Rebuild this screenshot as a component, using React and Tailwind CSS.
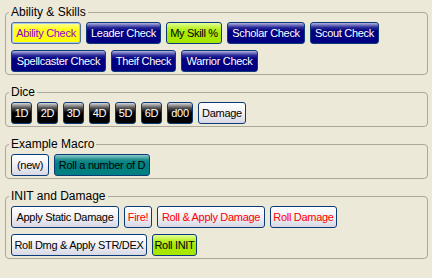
const navy = "text-white bg-[linear-gradient(to_bottom,#b4b4e0_0%,#2a2a98_22%,#000080_40%,#000080_100%)]";
const black = "text-white bg-[linear-gradient(to_bottom,#d8d8d8_0%,#505050_25%,#000000_50%,#000000_100%)]";
const plain = "bg-[linear-gradient(to_bottom,#ffffff_0%,#f2f2f6_45%,#d8d8e6_100%)]";
const lime = "text-black bg-[linear-gradient(to_bottom,#e4ff9c_0%,#bff232_25%,#a8e800_50%,#a8e800_100%)]";
const teal = "text-black bg-[linear-gradient(to_bottom,#8ccaca_0%,#1a8a8a_25%,#008080_45%,#008080_100%)]";

const groups = [
  {
    title: "Ability & Skills",
    buttons: [
      { label: "Ability Check", w: "w-[70px]", cls: "text-[#9000d0] bg-[linear-gradient(to_bottom,#ffffa0_0%,#ffff20_30%,#ffff00_100%)] border-[#4d6f9f] shadow-[inset_0_0_0_1px_#a9c6f0]" },
      { label: "Leader Check", w: "w-[75px]", cls: navy },
      { label: "My Skill %", w: "w-[56px]", cls: lime },
      { label: "Scholar Check", w: "w-[78px]", cls: navy },
      { label: "Scout Check", w: "w-[69px]", cls: navy },
      { label: "Spellcaster Check", w: "w-[95px]", cls: navy },
      { label: "Theif Check", w: "w-[65px]", cls: navy },
      { label: "Warrior Check", w: "w-[77px]", cls: navy },
    ],
  },
  {
    title: "Dice",
    buttons: [
      { label: "1D", w: "w-[21px]", cls: black },
      { label: "2D", w: "w-[21px]", cls: black },
      { label: "3D", w: "w-[21px]", cls: black },
      { label: "4D", w: "w-[21px]", cls: black },
      { label: "5D", w: "w-[21px]", cls: black },
      { label: "6D", w: "w-[21px]", cls: black },
      { label: "d00", w: "w-[26px]", cls: black },
      { label: "Damage", w: "w-[48px]", cls: plain + " text-black" },
    ],
  },
  {
    title: "Example Macro",
    buttons: [
      { label: "(new)", w: "w-[38px]", cls: plain + " text-black" },
      { label: "Roll a number of D", w: "w-[96px]", cls: teal },
    ],
  },
  {
    title: "INIT and Damage",
    buttons: [
      { label: "Apply Static Damage", w: "w-[108px]", cls: plain + " text-black" },
      { label: "Fire!", w: "w-[28px]", cls: plain + " text-[#ff0000]" },
      { label: "Roll & Apply Damage", w: "w-[108px]", cls: plain + " text-[#ff0000]" },
      { label: "Roll Damage", w: "w-[67px]", cls: plain + " text-[#ff0000]" },
      { label: "Roll Dmg & Apply STR/DEX", w: "w-[136px]", cls: plain + " text-black" },
      { label: "Roll INIT", w: "w-[45px]", cls: lime },
    ],
  },
];

function MacroButton({ label, w, cls }) {
  return (
    <button
      className={`h-[22px] ${w} flex items-center justify-center overflow-hidden whitespace-nowrap rounded-[3px] border border-[#0a3a78] text-[11px] leading-none tracking-[-0.3px] ${cls}`}
    >
      {label}
    </button>
  );
}

export default function App() {
  return (
    <div className="min-h-screen bg-[#ece9d8] pt-[5px] font-['Liberation_Sans',Arial,sans-serif] text-black">
      <div className="flex flex-col gap-[10px]">
        {groups.map((g) => (
          <fieldset
            key={g.title}
            className="ml-[5px] mr-[4px] rounded-[4px] border border-[#aca899] px-[5px] pt-[2px] pb-[2px]"
          >
            <legend className="-ml-[2px] px-[2px] text-[12px] leading-[15px]">
              {g.title}
            </legend>
            <div className="flex flex-wrap gap-x-[5px] gap-y-[6px]">
              {g.buttons.map((b) => (
                <MacroButton key={b.label} {...b} />
              ))}
            </div>
          </fieldset>
        ))}
      </div>
    </div>
  );
}
